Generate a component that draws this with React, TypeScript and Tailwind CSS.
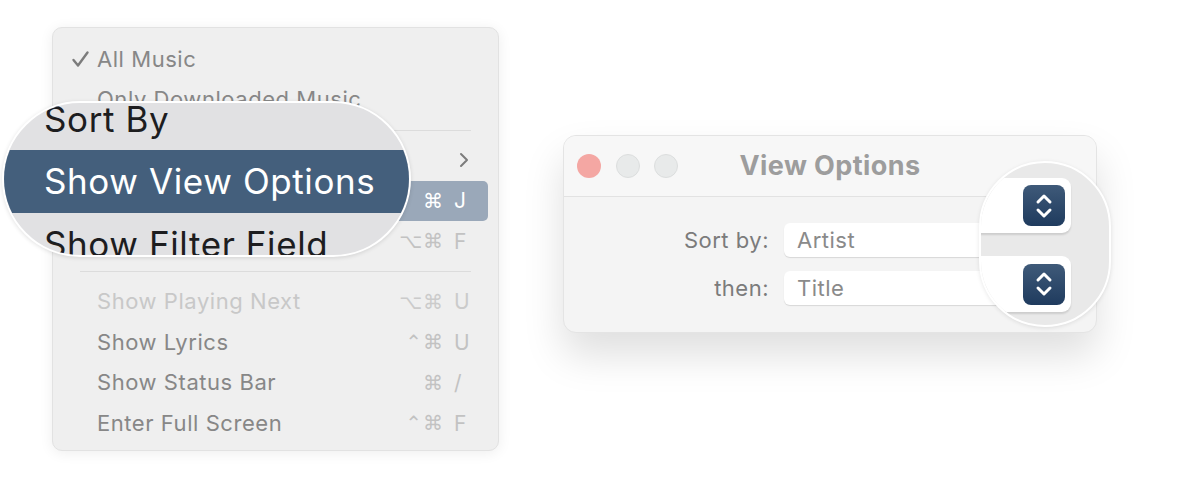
const font = "font-['Inter','Noto_Sans','DejaVu_Sans',sans-serif]";

type Item = { label: string; mods?: string; k?: string; disabled?: boolean; check?: boolean; submenu?: boolean; active?: boolean };

function Shortcut({ mods, k, active, disabled }: { mods?: string; k?: string; active?: boolean; disabled?: boolean }) {
  const c = active ? "text-white" : disabled ? "text-[#cbcbcb]" : "text-[#c2c2c2]";
  return (
    <div className={`flex items-center ${c}`}>
      <span className="font-['DejaVu_Sans',sans-serif] text-[20px] tracking-[1px]">{mods}</span>
      <span className="w-[27px] pl-[10px] text-[21px]">{k}</span>
    </div>
  );
}

function MenuRow({ item }: { item: Item }) {
  const text = item.active ? "text-white" : item.disabled ? "text-[#c8c8c8]" : "text-[#878787]";
  return (
    <div className={`flex h-[40.5px] items-center rounded-[5px] pr-[17px] ${item.active ? "bg-[#9aa8b9]" : ""}`}>
      <span className="flex w-[34px] items-center pl-[8px]">
        {item.check && (
          <svg width="19" height="18" viewBox="0 0 19 18">
            <path d="M2.5 10 L7 15.5 L16.5 2.5" fill="none" stroke="#7c7c7c" strokeWidth="2.4" strokeLinecap="round" strokeLinejoin="round" />
          </svg>
        )}
      </span>
      <span className={`flex-1 text-[22px] tracking-[0.55px] ${text}`}>{item.label}</span>
      {item.submenu ? (
        <svg width="10" height="16" viewBox="0 0 10 16" className="mr-[2px]">
          <path d="M2 2 L8 8 L2 14" fill="none" stroke="#7c7c7c" strokeWidth="2" strokeLinecap="round" strokeLinejoin="round" />
        </svg>
      ) : (
        <Shortcut mods={item.mods} k={item.k} active={item.active} disabled={item.disabled} />
      )}
    </div>
  );
}

function Separator() {
  return <div className="mx-[17px] my-[9.5px] h-px bg-[#dcdcdc]" />;
}

function Stepper() {
  return (
    <div className="flex h-[41px] w-[42px] items-center justify-center rounded-[8px] bg-gradient-to-b from-[#3f5a79] to-[#1f3b5e]">
      <svg width="20" height="28" viewBox="0 0 20 28">
        <path d="M4 10 L10 4 L16 10 M4 18 L10 24 L16 18" fill="none" stroke="white" strokeWidth="3" strokeLinecap="round" strokeLinejoin="round" />
      </svg>
    </div>
  );
}

function Field({ label, value }: { label: string; value: string }) {
  return (
    <div className="flex items-center">
      <span className="w-[220px] pr-[15px] text-right text-[22px] tracking-[0.5px] text-[#7b7b7b]">{label}</span>
      <div className="flex h-[34px] w-[280px] items-center rounded-[6px] bg-white pl-[13px] text-[22px] tracking-[0.5px] text-[#8a8a8a] shadow-[0_1px_1px_rgba(0,0,0,0.12)]">
        {value}
      </div>
    </div>
  );
}

export default function App() {
  const top: Item[] = [
    { label: "All Music", check: true },
    { label: "Only Downloaded Music" },
  ];
  const mid: Item[] = [
    { label: "Sort By", submenu: true },
    { label: "Show View Options", mods: "⌘", k: "J", active: true },
    { label: "Show Filter Field", mods: "⌥⌘", k: "F" },
  ];
  const bottom: Item[] = [
    { label: "Show Playing Next", mods: "⌥⌘", k: "U", disabled: true },
    { label: "Show Lyrics", mods: "⌃⌘", k: "U" },
    { label: "Show Status Bar", mods: "⌘", k: "/" },
    { label: "Enter Full Screen", mods: "⌃⌘", k: "F" },
  ];

  return (
    <div className={`relative h-[493px] w-[1200px] overflow-hidden bg-white ${font}`}>
      <div className="flex items-start pl-[52px] pt-[27px]">
        {/* menu */}
        <div className="w-[447px] rounded-[10px] border border-[#e2e2e2] bg-[#efefef] px-[10px] pb-[6px] pt-[11px] shadow-[0_2px_14px_rgba(0,0,0,0.07)]">
          {top.map((i) => <MenuRow key={i.label} item={i} />)}
          <Separator />
          {mid.map((i) => <MenuRow key={i.label} item={i} />)}
          <Separator />
          {bottom.map((i) => <MenuRow key={i.label} item={i} />)}
        </div>

        {/* window */}
        <div className="ml-[64px] mt-[108px] w-[534px] overflow-hidden rounded-[13px] border border-[#e4e4e4] bg-[#f4f4f4] shadow-[0_22px_40px_rgba(0,0,0,0.13)]">
          <div className="relative flex h-[61px] items-center border-b border-[#e2e2e2] bg-[#f7f7f7] pl-[13px]">
            <div className="flex gap-[14.5px]">
              <div className="h-[24px] w-[24px] rounded-full bg-[#f4a7a3]" />
              <div className="h-[24px] w-[24px] rounded-full border border-[#dcdede] bg-[#e8eaea]" />
              <div className="h-[24px] w-[24px] rounded-full border border-[#dcdede] bg-[#e8eaea]" />
            </div>
            <div className="absolute inset-0 flex items-center justify-center text-[27px] font-bold tracking-[0.4px] text-[#9d9d9d]">View Options</div>
          </div>
          <div className="flex flex-col gap-[14px] pb-[27px] pt-[26px]">
            <Field label="Sort by:" value="Artist" />
            <Field label="then:" value="Title" />
          </div>
        </div>
      </div>

      {/* left magnifier */}
      <div className="absolute left-[2px] top-[101px] h-[156px] w-[409px] overflow-hidden rounded-[78px] border-2 border-white bg-[#e1e1e3] shadow-[0_1px_4px_rgba(0,0,0,0.12)]">
        <div className="mt-[-15px] flex flex-col text-[35px] tracking-[0.6px]">
          <div className="flex h-[62px] items-center pl-[40px] text-[#1d1d1f]">Sort By</div>
          <div className="flex h-[63px] items-center bg-[#445f7c] pl-[40px] text-white">Show View Options</div>
          <div className="flex h-[62px] items-center pl-[40px] text-[#1d1d1f]">Show Filter Field</div>
        </div>
      </div>

      {/* right magnifier */}
      <div className="absolute left-[979px] top-[161px] h-[166px] w-[132px] overflow-hidden rounded-[66px] border-2 border-white bg-[#e9e9e9] shadow-[0_1px_4px_rgba(0,0,0,0.1)]">
        <div className="ml-[-42px] mt-[15px] flex w-[132px] flex-col gap-[23px]">
          <div className="flex h-[55px] items-center justify-end rounded-[9px] bg-white pr-[6px] shadow-[0_2px_2px_rgba(0,0,0,0.12)]">
            <Stepper />
          </div>
          <div className="flex h-[56px] items-center justify-end rounded-[9px] bg-white pr-[6px] shadow-[0_2px_2px_rgba(0,0,0,0.12)]">
            <Stepper />
          </div>
        </div>
      </div>
    </div>
  );
}
